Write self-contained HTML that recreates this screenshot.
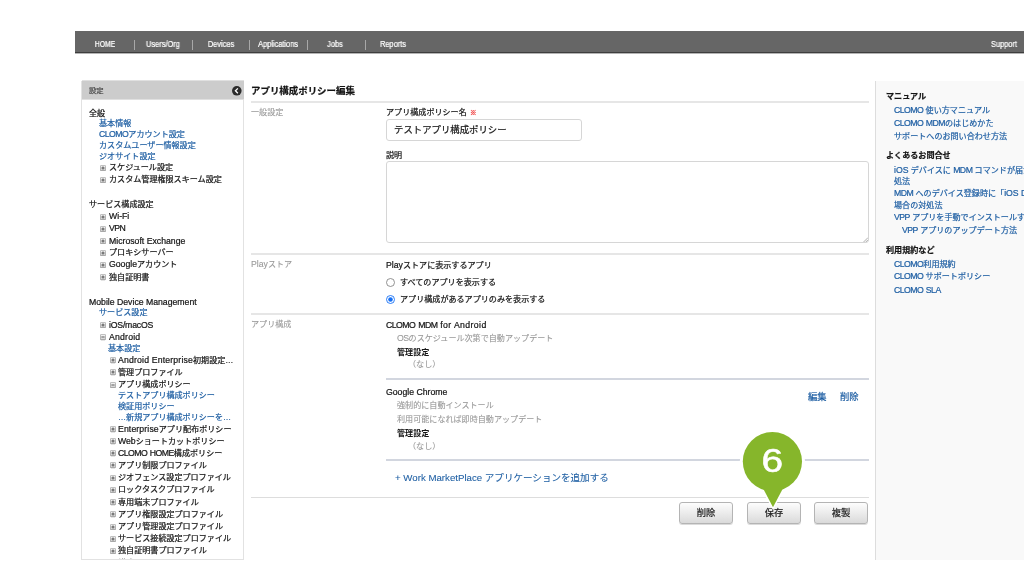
<!DOCTYPE html>
<html lang="ja"><head><meta charset="utf-8"><title>アプリ構成ポリシー編集</title><style>
html,body{margin:0;padding:0;background:#fff;}
body{width:1024px;height:576px;position:relative;overflow:hidden;font-family:"Liberation Sans","Noto Sans CJK JP",sans-serif;font-size:8px;color:#222;}
.b{position:absolute;display:block;}
.t{-webkit-text-stroke:0.22px;will-change:transform;position:absolute;white-space:nowrap;line-height:12px;height:12px;font-size:8.08px;}
.dk{color:#151515;}
.gr{color:#999;-webkit-text-stroke:0.1px;}
.lk{color:#1f5fa3;}
.nav{color:#fff;font-size:8.2px;}
.U{letter-spacing:-0.5px;line-height:0;}
.L{letter-spacing:0;line-height:0;}
</style></head><body>
<div class="b " style="left:75px;top:31px;width:949px;height:21px;background:#666;"></div>
<div class="b " style="left:75px;top:52px;width:949px;height:1px;background:#3e3e3e;"></div>
<div class="b " style="left:75px;top:53px;width:949px;height:1px;background:#b4b4b4;"></div>
<div class="b " style="left:133.75px;top:39.5px;width:1px;height:10px;background:#a8a8a8;"></div>
<div class="b " style="left:191.5px;top:39.5px;width:1px;height:10px;background:#a8a8a8;"></div>
<div class="b " style="left:249.0px;top:39.5px;width:1px;height:10px;background:#a8a8a8;"></div>
<div class="b " style="left:306.75px;top:39.5px;width:1px;height:10px;background:#a8a8a8;"></div>
<div class="b " style="left:364.75px;top:39.5px;width:1px;height:10px;background:#a8a8a8;"></div>
<div class="t nav" style="left:75px;width:60px;top:38.90px;text-align:center;transform:scaleX(0.83);">HOME</div>
<div class="t nav" style="left:133px;width:60px;top:38.90px;text-align:center;transform:scaleX(0.905);">Users/Org</div>
<div class="t nav" style="left:190.5px;width:60px;top:38.90px;text-align:center;transform:scaleX(0.905);">Devices</div>
<div class="t nav" style="left:248px;width:60px;top:38.90px;text-align:center;transform:scaleX(0.905);">Applications</div>
<div class="t nav" style="left:305.25px;width:60px;top:38.90px;text-align:center;transform:scaleX(0.905);">Jobs</div>
<div class="t nav" style="left:363.25px;width:60px;top:38.90px;text-align:center;transform:scaleX(0.905);">Reports</div>
<div class="t nav" style="left:991.3px;top:38.90px;transform:scaleX(0.905);transform-origin:0 0;">Support</div>
<svg class="b" style="width:0;height:0"><defs><linearGradient id="pg" x1="0" y1="0" x2="0" y2="1"><stop offset="0" stop-color="#fafafa"/><stop offset="1" stop-color="#cfcfcf"/></linearGradient></defs></svg>
<div class="b side" style="left:81px;top:80.5px;width:163px;height:479px;border:1px solid #e2e2e2;border-top:none;box-sizing:border-box;background:#fff;overflow:hidden;"></div>
<div class="b " style="left:82px;top:80px;width:162px;height:20px;background:linear-gradient(#e0e0e0 0,#e0e0e0 1px,#ccc 1px,#ccc 19px,#e0e0e0 19px);"></div>
<div class="t " style="left:89px;top:84.50px;font-size:7.3px;color:#484848;">設定</div>
<svg class="b" style="left:232px;top:86.2px;width:9.6px;height:9.6px" viewBox="0 0 20 20"><circle cx="10" cy="10" r="10" fill="#2c2c2c"/><path d="M12.2 5 L7.2 10 L12.2 15" fill="none" stroke="#fff" stroke-width="2.7"/></svg>
<div class="t dk" style="left:89px;top:107.75px;">全般</div>
<div class="t lk" style="left:98.5px;top:117.75px;">基本情報</div>
<div class="t lk" style="left:98.5px;top:129.00px;"><span class="U" style="font-size:8.70px">CLOMO</span>アカウント設定</div>
<div class="t lk" style="left:98.5px;top:139.50px;">カスタムユーザー情報設定</div>
<div class="t lk" style="left:98.5px;top:150.50px;">ジオサイト設定</div>
<svg class="b" style="left:100.20px;top:164.80px;width:6px;height:6.6px" viewBox="0 0 12 13.2"><rect x="0.8" y="1.6" width="10.4" height="11" rx="1.6" fill="#aaa"/><rect x="0.8" y="0.8" width="10.4" height="10.4" rx="1.6" fill="url(#pg)" stroke="#9a9a9a" stroke-width="1.3"/><path d="M2.8 6H9.2M6 2.8V9.2" stroke="#333" stroke-width="1.5"/></svg>
<div class="t dk" style="left:108.5px;top:162.25px;">スケジュール設定</div>
<svg class="b" style="left:100.20px;top:176.55px;width:6px;height:6.6px" viewBox="0 0 12 13.2"><rect x="0.8" y="1.6" width="10.4" height="11" rx="1.6" fill="#aaa"/><rect x="0.8" y="0.8" width="10.4" height="10.4" rx="1.6" fill="url(#pg)" stroke="#9a9a9a" stroke-width="1.3"/><path d="M2.8 6H9.2M6 2.8V9.2" stroke="#333" stroke-width="1.5"/></svg>
<div class="t dk" style="left:108.5px;top:174.00px;">カスタム管理権限スキーム設定</div>
<div class="t dk" style="left:89px;top:199.25px;">サービス構成設定</div>
<svg class="b" style="left:100.20px;top:213.55px;width:6px;height:6.6px" viewBox="0 0 12 13.2"><rect x="0.8" y="1.6" width="10.4" height="11" rx="1.6" fill="#aaa"/><rect x="0.8" y="0.8" width="10.4" height="10.4" rx="1.6" fill="url(#pg)" stroke="#9a9a9a" stroke-width="1.3"/><path d="M2.8 6H9.2M6 2.8V9.2" stroke="#333" stroke-width="1.5"/></svg>
<div class="t dk" style="left:108.5px;top:211.40px;"><span class="L" style="font-size:8.70px">Wi-Fi</span></div>
<svg class="b" style="left:100.20px;top:225.55px;width:6px;height:6.6px" viewBox="0 0 12 13.2"><rect x="0.8" y="1.6" width="10.4" height="11" rx="1.6" fill="#aaa"/><rect x="0.8" y="0.8" width="10.4" height="10.4" rx="1.6" fill="url(#pg)" stroke="#9a9a9a" stroke-width="1.3"/><path d="M2.8 6H9.2M6 2.8V9.2" stroke="#333" stroke-width="1.5"/></svg>
<div class="t dk" style="left:108.5px;top:223.40px;"><span class="U" style="font-size:8.70px">VPN</span></div>
<svg class="b" style="left:100.20px;top:237.80px;width:6px;height:6.6px" viewBox="0 0 12 13.2"><rect x="0.8" y="1.6" width="10.4" height="11" rx="1.6" fill="#aaa"/><rect x="0.8" y="0.8" width="10.4" height="10.4" rx="1.6" fill="url(#pg)" stroke="#9a9a9a" stroke-width="1.3"/><path d="M2.8 6H9.2M6 2.8V9.2" stroke="#333" stroke-width="1.5"/></svg>
<div class="t dk" style="left:108.5px;top:235.65px;"><span class="L" style="font-size:8.70px">Microsoft Exchange</span></div>
<svg class="b" style="left:100.20px;top:249.80px;width:6px;height:6.6px" viewBox="0 0 12 13.2"><rect x="0.8" y="1.6" width="10.4" height="11" rx="1.6" fill="#aaa"/><rect x="0.8" y="0.8" width="10.4" height="10.4" rx="1.6" fill="url(#pg)" stroke="#9a9a9a" stroke-width="1.3"/><path d="M2.8 6H9.2M6 2.8V9.2" stroke="#333" stroke-width="1.5"/></svg>
<div class="t dk" style="left:108.5px;top:247.25px;">プロキシサーバー</div>
<svg class="b" style="left:100.20px;top:261.80px;width:6px;height:6.6px" viewBox="0 0 12 13.2"><rect x="0.8" y="1.6" width="10.4" height="11" rx="1.6" fill="#aaa"/><rect x="0.8" y="0.8" width="10.4" height="10.4" rx="1.6" fill="url(#pg)" stroke="#9a9a9a" stroke-width="1.3"/><path d="M2.8 6H9.2M6 2.8V9.2" stroke="#333" stroke-width="1.5"/></svg>
<div class="t dk" style="left:108.5px;top:259.25px;"><span class="L" style="font-size:8.70px">Google</span>アカウント</div>
<svg class="b" style="left:100.20px;top:274.05px;width:6px;height:6.6px" viewBox="0 0 12 13.2"><rect x="0.8" y="1.6" width="10.4" height="11" rx="1.6" fill="#aaa"/><rect x="0.8" y="0.8" width="10.4" height="10.4" rx="1.6" fill="url(#pg)" stroke="#9a9a9a" stroke-width="1.3"/><path d="M2.8 6H9.2M6 2.8V9.2" stroke="#333" stroke-width="1.5"/></svg>
<div class="t dk" style="left:108.5px;top:271.50px;">独自証明書</div>
<div class="t dk" style="left:89px;top:297.15px;"><span class="L" style="font-size:8.70px">Mobile Device Management</span></div>
<div class="t lk" style="left:98.5px;top:307.25px;">サービス設定</div>
<svg class="b" style="left:100.20px;top:321.80px;width:6px;height:6.6px" viewBox="0 0 12 13.2"><rect x="0.8" y="1.6" width="10.4" height="11" rx="1.6" fill="#aaa"/><rect x="0.8" y="0.8" width="10.4" height="10.4" rx="1.6" fill="url(#pg)" stroke="#9a9a9a" stroke-width="1.3"/><path d="M2.8 6H9.2M6 2.8V9.2" stroke="#333" stroke-width="1.5"/></svg>
<div class="t dk" style="left:108.5px;top:319.65px;"><span class="L" style="font-size:8.70px;letter-spacing:-0.2px">iOS/macOS</span></div>
<svg class="b" style="left:100.20px;top:334.05px;width:6px;height:6.6px" viewBox="0 0 12 13.2"><rect x="0.8" y="1.6" width="10.4" height="11" rx="1.6" fill="#aaa"/><rect x="0.8" y="0.8" width="10.4" height="10.4" rx="1.6" fill="url(#pg)" stroke="#9a9a9a" stroke-width="1.3"/><path d="M2.8 6H9.2" stroke="#333" stroke-width="1.5"/></svg>
<div class="t dk" style="left:108.5px;top:331.90px;"><span class="L" style="font-size:8.70px;letter-spacing:0.2px">Android</span></div>
<div class="t lk" style="left:108px;top:342.75px;">基本設定</div>
<svg class="b" style="left:109.70px;top:357.30px;width:6px;height:6.6px" viewBox="0 0 12 13.2"><rect x="0.8" y="1.6" width="10.4" height="11" rx="1.6" fill="#aaa"/><rect x="0.8" y="0.8" width="10.4" height="10.4" rx="1.6" fill="url(#pg)" stroke="#9a9a9a" stroke-width="1.3"/><path d="M2.8 6H9.2M6 2.8V9.2" stroke="#333" stroke-width="1.5"/></svg>
<div class="t dk" style="left:118px;top:354.75px;"><span class="L" style="font-size:8.70px;letter-spacing:0.17px">Android Enterprise</span>初期設定…</div>
<svg class="b" style="left:109.70px;top:369.30px;width:6px;height:6.6px" viewBox="0 0 12 13.2"><rect x="0.8" y="1.6" width="10.4" height="11" rx="1.6" fill="#aaa"/><rect x="0.8" y="0.8" width="10.4" height="10.4" rx="1.6" fill="url(#pg)" stroke="#9a9a9a" stroke-width="1.3"/><path d="M2.8 6H9.2M6 2.8V9.2" stroke="#333" stroke-width="1.5"/></svg>
<div class="t dk" style="left:118px;top:366.75px;">管理プロファイル</div>
<svg class="b" style="left:109.70px;top:381.55px;width:6px;height:6.6px" viewBox="0 0 12 13.2"><rect x="0.8" y="1.6" width="10.4" height="11" rx="1.6" fill="#aaa"/><rect x="0.8" y="0.8" width="10.4" height="10.4" rx="1.6" fill="url(#pg)" stroke="#9a9a9a" stroke-width="1.3"/><path d="M2.8 6H9.2" stroke="#333" stroke-width="1.5"/></svg>
<div class="t dk" style="left:118px;top:379.00px;">アプリ構成ポリシー</div>
<div class="t lk" style="left:117.5px;top:390.00px;">テストアプリ構成ポリシー</div>
<div class="t lk" style="left:117.5px;top:401.00px;">検証用ポリシー</div>
<div class="t lk" style="left:117.5px;top:411.75px;">…新規アプリ構成ポリシーを…</div>
<svg class="b" style="left:109.70px;top:426.05px;width:6px;height:6.6px" viewBox="0 0 12 13.2"><rect x="0.8" y="1.6" width="10.4" height="11" rx="1.6" fill="#aaa"/><rect x="0.8" y="0.8" width="10.4" height="10.4" rx="1.6" fill="url(#pg)" stroke="#9a9a9a" stroke-width="1.3"/><path d="M2.8 6H9.2M6 2.8V9.2" stroke="#333" stroke-width="1.5"/></svg>
<div class="t dk" style="left:118px;top:423.50px;"><span class="L" style="font-size:8.70px;letter-spacing:0.12px">Enterprise</span>アプリ配布ポリシー</div>
<svg class="b" style="left:109.70px;top:438.05px;width:6px;height:6.6px" viewBox="0 0 12 13.2"><rect x="0.8" y="1.6" width="10.4" height="11" rx="1.6" fill="#aaa"/><rect x="0.8" y="0.8" width="10.4" height="10.4" rx="1.6" fill="url(#pg)" stroke="#9a9a9a" stroke-width="1.3"/><path d="M2.8 6H9.2M6 2.8V9.2" stroke="#333" stroke-width="1.5"/></svg>
<div class="t dk" style="left:118px;top:435.50px;"><span class="L" style="font-size:8.70px">Web</span>ショートカットポリシー</div>
<svg class="b" style="left:109.70px;top:450.30px;width:6px;height:6.6px" viewBox="0 0 12 13.2"><rect x="0.8" y="1.6" width="10.4" height="11" rx="1.6" fill="#aaa"/><rect x="0.8" y="0.8" width="10.4" height="10.4" rx="1.6" fill="url(#pg)" stroke="#9a9a9a" stroke-width="1.3"/><path d="M2.8 6H9.2M6 2.8V9.2" stroke="#333" stroke-width="1.5"/></svg>
<div class="t dk" style="left:118px;top:447.75px;"><span class="U" style="font-size:8.70px">CLOMO</span><span class="L" style="font-size:8.70px"> </span><span class="U" style="font-size:8.70px">HOME</span>構成ポリシー</div>
<svg class="b" style="left:109.70px;top:462.30px;width:6px;height:6.6px" viewBox="0 0 12 13.2"><rect x="0.8" y="1.6" width="10.4" height="11" rx="1.6" fill="#aaa"/><rect x="0.8" y="0.8" width="10.4" height="10.4" rx="1.6" fill="url(#pg)" stroke="#9a9a9a" stroke-width="1.3"/><path d="M2.8 6H9.2M6 2.8V9.2" stroke="#333" stroke-width="1.5"/></svg>
<div class="t dk" style="left:118px;top:459.75px;">アプリ制限プロファイル</div>
<svg class="b" style="left:109.70px;top:474.80px;width:6px;height:6.6px" viewBox="0 0 12 13.2"><rect x="0.8" y="1.6" width="10.4" height="11" rx="1.6" fill="#aaa"/><rect x="0.8" y="0.8" width="10.4" height="10.4" rx="1.6" fill="url(#pg)" stroke="#9a9a9a" stroke-width="1.3"/><path d="M2.8 6H9.2M6 2.8V9.2" stroke="#333" stroke-width="1.5"/></svg>
<div class="t dk" style="left:118px;top:472.25px;">ジオフェンス設定プロファイル</div>
<svg class="b" style="left:109.70px;top:486.80px;width:6px;height:6.6px" viewBox="0 0 12 13.2"><rect x="0.8" y="1.6" width="10.4" height="11" rx="1.6" fill="#aaa"/><rect x="0.8" y="0.8" width="10.4" height="10.4" rx="1.6" fill="url(#pg)" stroke="#9a9a9a" stroke-width="1.3"/><path d="M2.8 6H9.2M6 2.8V9.2" stroke="#333" stroke-width="1.5"/></svg>
<div class="t dk" style="left:118px;top:484.25px;">ロックタスクプロファイル</div>
<svg class="b" style="left:109.70px;top:499.05px;width:6px;height:6.6px" viewBox="0 0 12 13.2"><rect x="0.8" y="1.6" width="10.4" height="11" rx="1.6" fill="#aaa"/><rect x="0.8" y="0.8" width="10.4" height="10.4" rx="1.6" fill="url(#pg)" stroke="#9a9a9a" stroke-width="1.3"/><path d="M2.8 6H9.2M6 2.8V9.2" stroke="#333" stroke-width="1.5"/></svg>
<div class="t dk" style="left:118px;top:496.50px;">専用端末プロファイル</div>
<svg class="b" style="left:109.70px;top:511.30px;width:6px;height:6.6px" viewBox="0 0 12 13.2"><rect x="0.8" y="1.6" width="10.4" height="11" rx="1.6" fill="#aaa"/><rect x="0.8" y="0.8" width="10.4" height="10.4" rx="1.6" fill="url(#pg)" stroke="#9a9a9a" stroke-width="1.3"/><path d="M2.8 6H9.2M6 2.8V9.2" stroke="#333" stroke-width="1.5"/></svg>
<div class="t dk" style="left:118px;top:508.75px;">アプリ権限設定プロファイル</div>
<svg class="b" style="left:109.70px;top:523.55px;width:6px;height:6.6px" viewBox="0 0 12 13.2"><rect x="0.8" y="1.6" width="10.4" height="11" rx="1.6" fill="#aaa"/><rect x="0.8" y="0.8" width="10.4" height="10.4" rx="1.6" fill="url(#pg)" stroke="#9a9a9a" stroke-width="1.3"/><path d="M2.8 6H9.2M6 2.8V9.2" stroke="#333" stroke-width="1.5"/></svg>
<div class="t dk" style="left:118px;top:521.00px;">アプリ管理設定プロファイル</div>
<svg class="b" style="left:109.70px;top:535.55px;width:6px;height:6.6px" viewBox="0 0 12 13.2"><rect x="0.8" y="1.6" width="10.4" height="11" rx="1.6" fill="#aaa"/><rect x="0.8" y="0.8" width="10.4" height="10.4" rx="1.6" fill="url(#pg)" stroke="#9a9a9a" stroke-width="1.3"/><path d="M2.8 6H9.2M6 2.8V9.2" stroke="#333" stroke-width="1.5"/></svg>
<div class="t dk" style="left:118px;top:533.00px;">サービス接続設定プロファイル</div>
<svg class="b" style="left:109.70px;top:547.55px;width:6px;height:6.6px" viewBox="0 0 12 13.2"><rect x="0.8" y="1.6" width="10.4" height="11" rx="1.6" fill="#aaa"/><rect x="0.8" y="0.8" width="10.4" height="10.4" rx="1.6" fill="url(#pg)" stroke="#9a9a9a" stroke-width="1.3"/><path d="M2.8 6H9.2M6 2.8V9.2" stroke="#333" stroke-width="1.5"/></svg>
<div class="t dk" style="left:118px;top:545.00px;">独自証明書プロファイル</div>
<div class="b" style="left:83px;top:550px;width:159px;height:9px;overflow:hidden"><div class="t dk" style="left:35px;top:7.9px">構成プロファイル</div></div>
<div class="t dk" style="left:251.25px;top:85.00px;font-size:9.45px;font-weight:bold;">アプリ構成ポリシー編集</div>
<div class="b " style="left:251px;top:101px;width:617.5px;height:2px;background:#e6e6e6;"></div>
<div class="t gr" style="left:251.25px;top:107.25px;">一般設定</div>
<div class="t dk" style="left:385.7px;top:107.25px;">アプリ構成ポリシー名 <span style="color:#e33;font-size:6.5px;position:relative;top:-0.5px;left:1px">※</span></div>
<div class="b " style="left:386px;top:119px;width:195.5px;height:22px;border:1px solid #d6d6d6;border-radius:3px;box-sizing:border-box;background:#fff;"></div>
<div class="t dk" style="left:393.7px;top:123.75px;font-size:9.4px;">テストアプリ構成ポリシー</div>
<div class="t dk" style="left:386.1px;top:150.25px;">説明</div>
<div class="b " style="left:386px;top:161px;width:482.5px;height:82px;border:1px solid #d6d6d6;border-radius:3px;box-sizing:border-box;background:#fff;"></div>
<svg class="b" style="left:862.6px;top:236.6px;width:5.6px;height:5.6px" viewBox="0 0 10 10"><path d="M9 1L1 9M9 5L5 9" stroke="#888" stroke-width="1.2"/></svg>
<div class="b " style="left:251px;top:253px;width:617.5px;height:2px;background:#e6e6e6;"></div>
<div class="t gr" style="left:251.25px;top:258.75px;"><span class="L" style="font-size:8.70px">Play</span>ストア</div>
<div class="t dk" style="left:386.1px;top:259.75px;"><span class="L" style="font-size:8.70px">Play</span>ストアに表示するアプリ</div>
<svg class="b" style="left:386px;top:278px;width:9px;height:9px" viewBox="0 0 18 18"><circle cx="9" cy="9" r="8" fill="#fff" stroke="#777" stroke-width="1.6"/></svg>
<div class="t dk" style="left:399.5px;top:277.25px;">すべてのアプリを表示する</div>
<svg class="b" style="left:386px;top:294.5px;width:9px;height:9px" viewBox="0 0 18 18"><circle cx="9" cy="9" r="8" fill="#fff" stroke="#1670f5" stroke-width="1.8"/><circle cx="9" cy="9" r="4.6" fill="#1670f5"/></svg>
<div class="t dk" style="left:399.5px;top:293.75px;">アプリ構成があるアプリのみを表示する</div>
<div class="b " style="left:251px;top:313px;width:617.5px;height:2px;background:#e6e6e6;"></div>
<div class="t gr" style="left:251.25px;top:319.15px;">アプリ構成</div>
<div class="t dk" style="left:386.1px;top:320.15px;"><span class="U" style="font-size:8.70px">CLOMO</span><span class="L" style="font-size:8.70px;letter-spacing:0.4px"> </span><span class="U" style="font-size:8.70px">MDM</span><span class="L" style="font-size:8.70px;letter-spacing:0.4px"> for Android</span></div>
<div class="t gr" style="left:397px;top:332.50px;"><span class="U" style="font-size:8.70px">OS</span>のスケジュール次第で自動アップデート</div>
<div class="t dk" style="left:397px;top:346.50px;font-weight:bold;-webkit-text-stroke:0;">管理設定</div>
<div class="t gr" style="left:408px;top:359.25px;">（なし）</div>
<div class="b " style="left:386px;top:378px;width:482.5px;height:2px;background:#d2d6df;"></div>
<div class="t dk" style="left:386.1px;top:386.90px;"><span class="L" style="font-size:8.70px">Google Chrome</span></div>
<div class="t lk" style="left:808px;top:391.00px;font-size:9.3px;">編集</div>
<div class="t lk" style="left:839.75px;top:391.00px;font-size:9.3px;">削除</div>
<div class="t gr" style="left:397px;top:399.75px;">強制的に自動インストール</div>
<div class="t gr" style="left:397px;top:414.00px;">利用可能になれば即時自動アップデート</div>
<div class="t dk" style="left:397px;top:428.00px;font-weight:bold;-webkit-text-stroke:0;">管理設定</div>
<div class="t gr" style="left:408px;top:441.00px;">（なし）</div>
<div class="b " style="left:386px;top:459px;width:482.5px;height:2px;background:#d2d6df;"></div>
<div class="t lk" style="left:395px;top:471.50px;font-size:9.55px;-webkit-text-stroke:0.08px;"><span class="L" style="font-size:9.68px">+ Work MarketPlace</span> アプリケーションを追加する</div>
<div class="b " style="left:251px;top:497px;width:617.5px;height:1px;background:#ddd;"></div>
<div class="b btn" style="left:679px;top:502px;width:54px;height:22px;border:1px solid #b4b4b4;border-radius:3px;box-sizing:border-box;box-shadow:0 1px 0 rgba(0,0,0,0.14);background:linear-gradient(#fdfdfd,#dadada);text-align:center;font-size:9.3px;line-height:21px;color:#222;-webkit-text-stroke:0.22px;will-change:transform;">削除</div>
<div class="b btn" style="left:746.75px;top:502px;width:54px;height:22px;border:1px solid #b4b4b4;border-radius:3px;box-sizing:border-box;box-shadow:0 1px 0 rgba(0,0,0,0.14);background:linear-gradient(#fdfdfd,#dadada);text-align:center;font-size:9.3px;line-height:21px;color:#222;-webkit-text-stroke:0.22px;will-change:transform;">保存</div>
<div class="b btn" style="left:814.25px;top:502px;width:54px;height:22px;border:1px solid #b4b4b4;border-radius:3px;box-sizing:border-box;box-shadow:0 1px 0 rgba(0,0,0,0.14);background:linear-gradient(#fdfdfd,#dadada);text-align:center;font-size:9.3px;line-height:21px;color:#222;-webkit-text-stroke:0.22px;will-change:transform;">複製</div>
<svg class="b" style="left:736px;top:426px;width:74px;height:84px;will-change:transform" viewBox="0 0 74 84">
<circle cx="36.4" cy="35.6" r="32.6" fill="#fff"/>
<path d="M22.5 58 L37 84 L51.5 58 Z" fill="#fff"/>
<circle cx="36.4" cy="35.6" r="29.6" fill="#86b62b"/>
<path d="M25.8 60 L36.6 80.6 Q37 81.2 37.4 80.6 L48.2 60 Z" fill="#86b62b"/>
<text transform="translate(36.4 46.2) scale(1.18 1)" text-anchor="middle" font-family="Liberation Sans, sans-serif" font-size="33" fill="#fff" stroke="#fff" stroke-width="0.5">6</text>
</svg>
<div class="b " style="left:875.25px;top:80.5px;width:150px;height:479.5px;background:#f9f9f9;border-left:1px solid #ddd;"></div>
<div class="t dk" style="left:886.2px;top:90.55px;font-weight:bold;">マニュアル</div>
<div class="t lk" style="left:894.1px;top:105.05px;"><span class="U" style="font-size:8.70px">CLOMO</span> 使い方マニュアル</div>
<div class="t lk" style="left:894.1px;top:117.85px;"><span class="U" style="font-size:8.70px">CLOMO</span><span class="L" style="font-size:8.70px"> </span><span class="U" style="font-size:8.70px">MDM</span>のはじめかた</div>
<div class="t lk" style="left:894.1px;top:130.65px;">サポートへのお問い合わせ方法</div>
<div class="t dk" style="left:886.2px;top:150.35px;font-weight:bold;">よくあるお問合せ</div>
<div class="t lk" style="left:894.1px;top:164.75px;"><span class="L" style="font-size:8.70px">iOS</span> デバイスに <span class="U" style="font-size:8.70px">MDM</span> コマンドが届かない場合の対</div>
<div class="t lk" style="left:894.1px;top:175.75px;">処法</div>
<div class="t lk" style="left:894.1px;top:188.15px;"><span class="U" style="font-size:8.70px">MDM</span> へのデバイス登録時に「<span class="L" style="font-size:8.70px">iOS Device</span>」と表示される</div>
<div class="t lk" style="left:894.1px;top:199.55px;">場合の対処法</div>
<div class="t lk" style="left:894.1px;top:211.95px;"><span class="U" style="font-size:8.70px">VPP</span> アプリを手動でインストールする方法</div>
<div class="t lk" style="left:902.35px;top:224.75px;"><span class="U" style="font-size:8.70px">VPP</span> アプリのアップデート方法</div>
<div class="t dk" style="left:886.2px;top:244.55px;font-weight:bold;">利用規約など</div>
<div class="t lk" style="left:894.1px;top:258.75px;"><span class="U" style="font-size:8.70px">CLOMO</span>利用規約</div>
<div class="t lk" style="left:894.1px;top:271.35px;"><span class="U" style="font-size:8.70px">CLOMO</span> サポートポリシー</div>
<div class="t lk" style="left:894.1px;top:284.85px;"><span class="U" style="font-size:8.70px">CLOMO</span><span class="L" style="font-size:8.70px"> </span><span class="U" style="font-size:8.70px">SLA</span></div>
</body></html>
